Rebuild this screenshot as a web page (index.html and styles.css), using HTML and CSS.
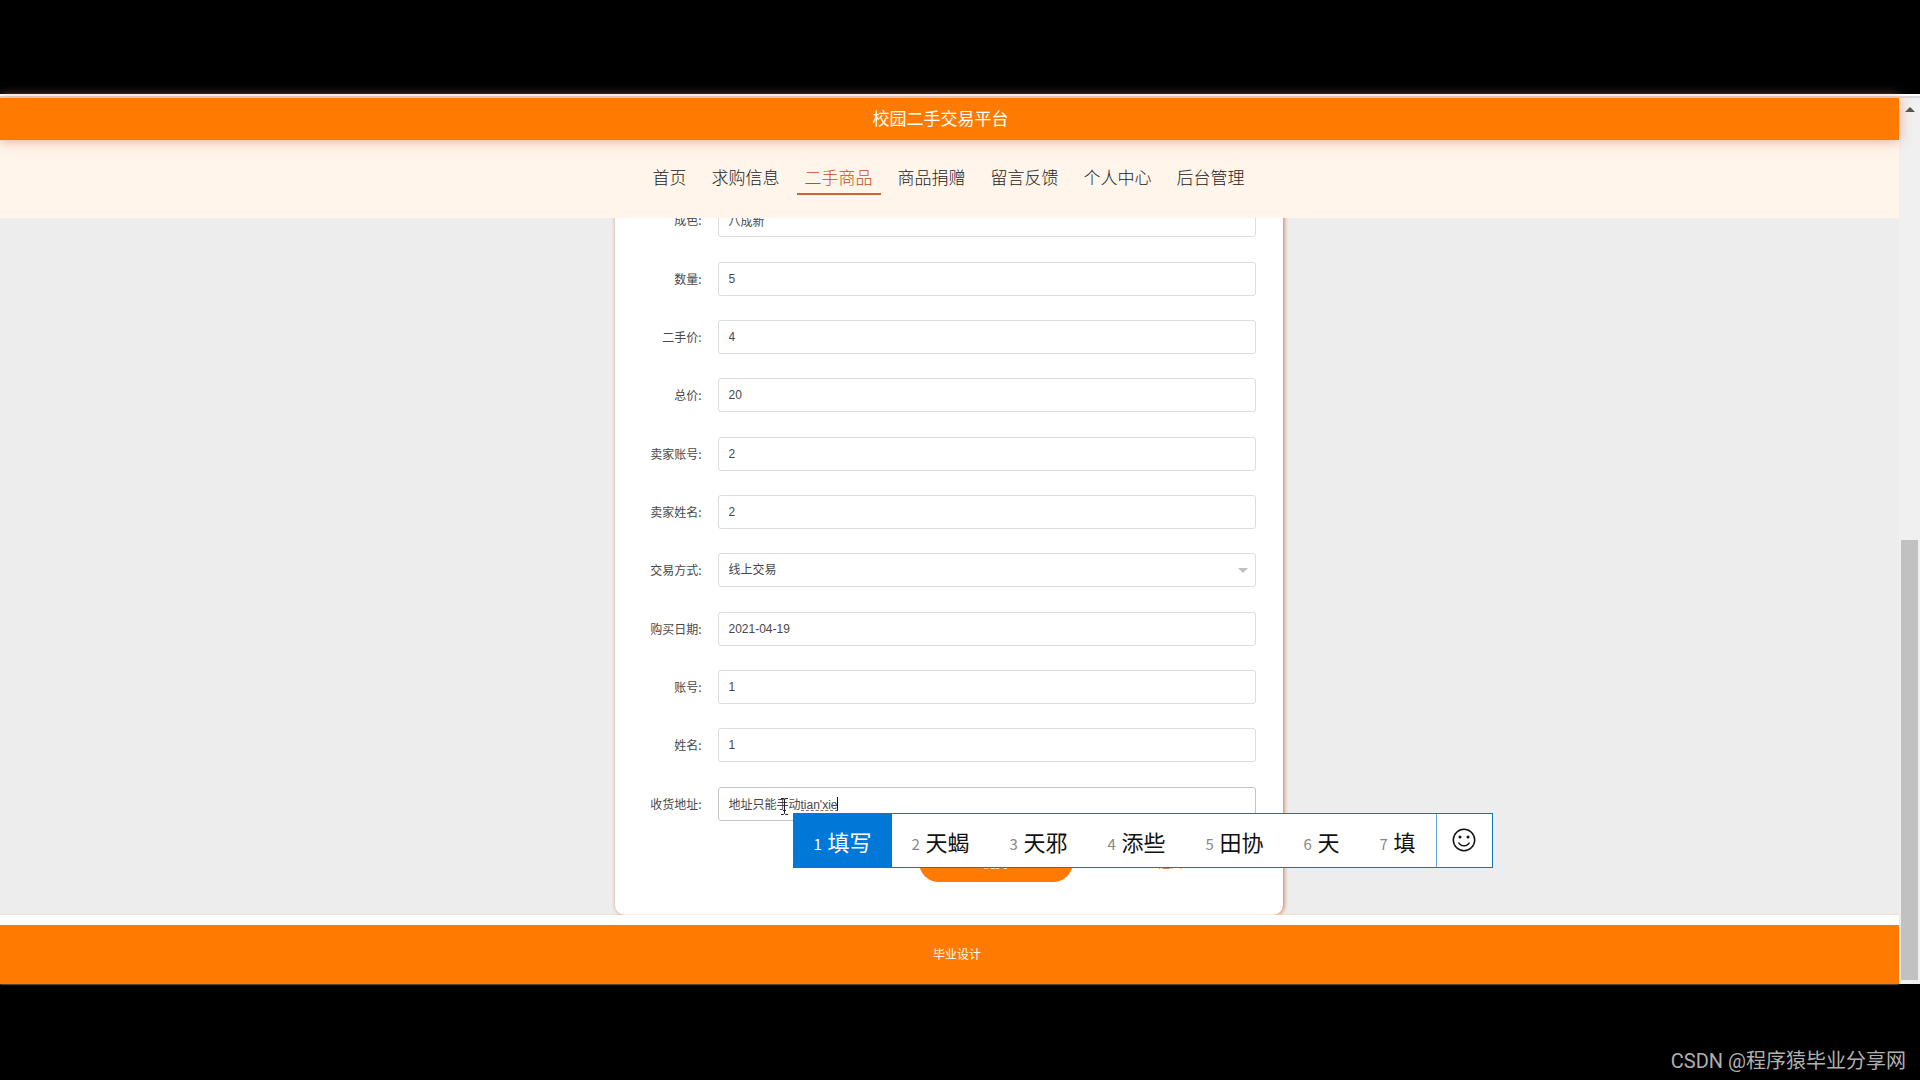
FILE: index.html
```html
<!DOCTYPE html>
<html lang="zh-CN">
<head>
<meta charset="utf-8">
<title>校园二手交易平台</title>
<link rel="stylesheet" href="styles.css">
</head>
<body>
<div class="window">
  <div class="page">
    <header class="title">校园二手交易平台</header>
    <nav class="nav">
      <a href="#">首页</a>
      <a href="#">求购信息</a>
      <a href="#" class="active">二手商品</a>
      <a href="#">商品捐赠</a>
      <a href="#">留言反馈</a>
      <a href="#">个人中心</a>
      <a href="#">后台管理</a>
    </nav>
    <main class="content">
      <form class="card">
        <div class="rows">
          <div class="row"><label for="f1">成色:</label><div class="field"><input id="f1" value="八成新"></div></div>
          <div class="row"><label for="f2">数量:</label><div class="field"><input id="f2" value="5"></div></div>
          <div class="row"><label for="f3">二手价:</label><div class="field"><input id="f3" value="4"></div></div>
          <div class="row"><label for="f4">总价:</label><div class="field"><input id="f4" value="20"></div></div>
          <div class="row"><label for="f5">卖家账号:</label><div class="field"><input id="f5" value="2"></div></div>
          <div class="row"><label for="f6">卖家姓名:</label><div class="field"><input id="f6" value="2"></div></div>
          <div class="row"><label for="f7">交易方式:</label><div class="field"><select id="f7"><option>线上交易</option></select><span class="arrow"></span></div></div>
          <div class="row"><label for="f8">购买日期:</label><div class="field"><input id="f8" value="2021-04-19"></div></div>
          <div class="row"><label for="f9">账号:</label><div class="field"><input id="f9" value="1"></div></div>
          <div class="row"><label for="f10">姓名:</label><div class="field"><input id="f10" value="1"></div></div>
          <div class="row"><label for="f11">收货地址:</label>
            <div class="field">
              <input id="f11" class="current" value="地址只能手动tian'xie">
              <span class="composing"></span>
              <svg class="pointer" width="9" height="17" viewBox="0 0 9 17" fill="none" stroke="#222"><path d="M1 .5h2.500l1 1 1-1H8M4.500 1.500v14M1 16.500h2.500l1-1 1 1H8M3 12.500h3"/></svg>
              <div class="ime">
                <ol class="candidates">
                  <li class="picked"><span class="num">1</span>填写</li>
                  <li><span class="num">2</span>天蝎</li>
                  <li><span class="num">3</span>天邪</li>
                  <li><span class="num">4</span>添些</li>
                  <li><span class="num">5</span>田协</li>
                  <li><span class="num">6</span>天</li>
                  <li><span class="num">7</span>填</li>
                </ol>
                <button type="button" class="emoji" aria-label="表情">
                  <svg width="24" height="24" viewBox="0 0 24 24" fill="none" stroke="#111" stroke-width="1.500"><circle cx="12" cy="12" r="10.700"/><path d="M6.500 14.500c2.200 4.300 8.800 4.300 11 0"/><circle cx="8" cy="9" r="1.500" fill="#111" stroke="none"/><circle cx="16" cy="9" r="1.500" fill="#111" stroke="none"/></svg>
                </button>
              </div>
            </div>
          </div>
        </div>
        <div class="actions">
          <button type="button" class="submit">提交</button>
          <button type="button" class="back">返回</button>
        </div>
      </form>
    </main>
    <footer class="footer">毕业设计</footer>
  </div>
  <div class="scrollbar"><span class="up"></span><span class="thumb"></span></div>
</div>
<div class="watermark">CSDN @程序猿毕业分享网</div>
</body>
</html>
```
FILE: styles.css
```css
* { box-sizing: border-box; }

body {
  margin: 0;
  height: 100vh;
  padding-top: 94px;
  display: flex;
  flex-direction: column;
  overflow: hidden;
  background: #000;
  color: #484848;
  font: 12px/16px "Noto Sans CJK SC", sans-serif;
}

button, input, select { font: inherit; color: inherit; }

.window {
  flex: 1;
  min-height: 0;
  display: flex;
  border-top: 2px solid #fff;
  background: #f0f0f0;
}

.page {
  flex: 1;
  min-width: 0;
  display: flex;
  flex-direction: column;
  border-top: 2px solid #d8d8dc;
}

.title {
  position: relative;
  z-index: 2;
  height: 42px;
  flex: none;
  padding-right: 18px;
  background: #ff7a00;
  box-shadow: 0 1px 12px #e8a890;
  color: #fff;
  font-size: 17px;
  line-height: 40px;
  text-align: center;
}

.nav {
  position: relative;
  z-index: 1;
  flex: none;
  height: 78px;
  padding: 20px 2px 0 0;
  display: flex;
  justify-content: center;
  align-items: flex-start;
  gap: 9px;
  background: #fff5eb;
  font-size: 17px;
  font-weight: 300;
}

.nav a {
  padding: 0 8px;
  border-bottom: 2px solid transparent;
  color: #222;
  line-height: 33px;
  text-decoration: none;
}

.nav .active { color: #cc4a18; border-color: #cf6433; }

.content {
  flex: 1;
  min-height: 0;
  padding-right: 2px;
  display: flex;
  flex-direction: column;
  justify-content: flex-end;
  align-items: center;
  overflow: hidden;
  background: #ededed;
}

.card {
  flex: none;
  width: 668px;
  padding: 0 27px 33px;
  border-radius: 10px;
  background: #fff;
  box-shadow: 1px 0 4px #d0734c;
}

.rows {
  display: grid;
  grid-auto-rows: 1fr;
  height: 642px;
}

.row { display: flex; align-items: center; gap: 16px; }
.row label { width: 60px; text-align: right; white-space: nowrap; }
.field { position: relative; flex: 1; display: flex; }

.field input, .field select {
  width: 100%;
  height: 34px;
  padding: 0 10px;
  border: 1px solid #dcdcdf;
  border-radius: 3px;
  background: #fff;
  font-family: "Liberation Sans", "Noto Sans CJK SC", sans-serif;
  appearance: none;
}

.field .current { border-color: #c4c4c8; }

.arrow {
  position: absolute;
  right: 8px;
  top: 15px;
  border: 5px solid transparent;
  border-top-color: #c0c0c0;
  border-bottom: 0;
}

.composing {
  position: absolute;
  left: 83px;
  top: 10px;
  width: 37px;
  height: 14px;
  border-right: 1px solid #111;
  border-bottom: 1px dashed #777;
}

.pointer { position: absolute; left: 62px; top: 11px; }

.ime {
  position: absolute;
  left: 75px;
  top: 26px;
  display: flex;
  height: 55px;
  border: 1px solid #1874b8;
  background: #fff;
}

.candidates {
  margin: 0;
  padding: 0;
  display: flex;
  list-style: none;
  color: #111;
  font-size: 22px;
  line-height: 54px;
  white-space: nowrap;
}

.candidates li { display: flex; height: 53px; padding: 0 20px; gap: 5px; }
.num { width: 9px; color: #888; font-size: 15px; line-height: 59px; }
.candidates .picked, .picked .num { color: #fff; }
.candidates .picked { background: #0078d7; }

.emoji {
  width: 56px;
  padding: 0;
  border: 0;
  border-left: 1px solid #62a5d8;
  background: #fff;
  display: grid;
  place-items: center;
}

.actions {
  display: flex;
  justify-content: flex-end;
  gap: 21px;
  padding: 9px 8px 0 0;
}

.actions button {
  width: 154px;
  height: 40px;
  padding-top: 2px;
  border: 0;
  border-radius: 20px;
  background: none;
}

.actions .submit { background: #ff7a00; color: #fff; }
.actions .back { color: #cf6433; }

.footer {
  flex: none;
  height: 69px;
  border-top: 10px solid #fff;
  padding-left: 15px;
  background: #ff7a00;
  box-shadow: 0 0 2px #ffc9a5;
  color: #fff;
  line-height: 58px;
  text-align: center;
}

.scrollbar {
  width: 21px;
  padding: 9px 2px 4px;
  display: flex;
  flex-direction: column;
  align-items: center;
  justify-content: space-between;
  border-top: 2px solid #d8d8dc;
}

.up { border: 5px solid transparent; border-top: 0; border-bottom-color: #505050; }
.thumb { width: 17px; height: 440px; background: #c1c1c1; }

.watermark {
  height: 96px;
  padding: 61px 14px 0;
  color: #b0b0b0;
  font: 20px/32px Roboto, "Noto Sans CJK SC", sans-serif;
  text-align: right;
}
```
